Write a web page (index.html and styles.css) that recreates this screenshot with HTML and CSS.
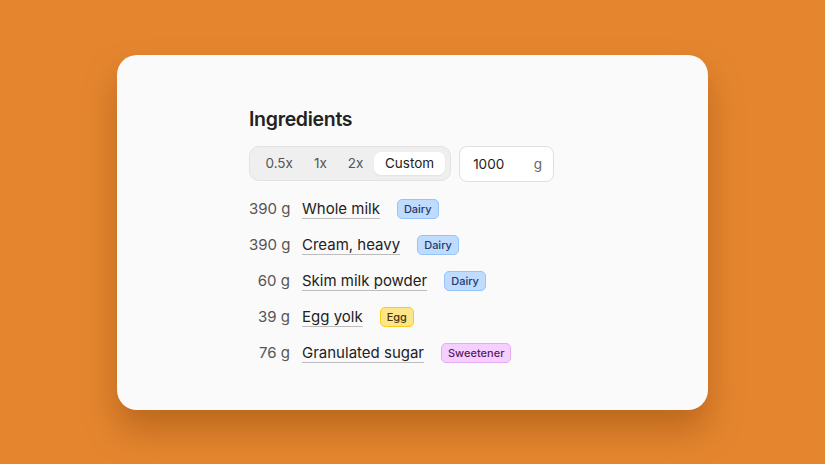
FILE: index.html
```html
<!doctype html>
<html lang="en">
<head>
    <meta charset="UTF-8">
    <title>Ingredients</title>
    <link rel="stylesheet" href="styles.css">
</head>
<body>
<div class="card">
    <h2 class="title">Ingredients</h2>
    <div class="controls">
        <div class="scale">
            <span class="opt">0.5x</span>
            <span class="opt">1x</span>
            <span class="opt">2x</span>
            <span class="opt active">Custom</span>
        </div>
        <div class="amount-box">
            <span class="val">1000</span>
            <span class="unit">g</span>
        </div>
    </div>
    <ul class="list">
        <li><span class="qty">390 g</span><span class="name">Whole milk</span><span class="tag dairy">Dairy</span></li>
        <li><span class="qty">390 g</span><span class="name">Cream, heavy</span><span class="tag dairy">Dairy</span></li>
        <li><span class="qty">60 g</span><span class="name">Skim milk powder</span><span class="tag dairy">Dairy</span></li>
        <li><span class="qty">39 g</span><span class="name">Egg yolk</span><span class="tag egg">Egg</span></li>
        <li><span class="qty">76 g</span><span class="name">Granulated sugar</span><span class="tag sweet">Sweetener</span></li>
    </ul>
</div>
</body>
</html>
```
FILE: styles.css
```css
* {
    margin: 0;
    padding: 0;
    box-sizing: border-box;
}

html, body {
    height: 100%;
}

body {
    background: #e5862f;
    font-family: Inter, "Noto Sans", sans-serif;
    display: flex;
    align-items: center;
    justify-content: center;
}

.card {
    width: 591px;
    height: 355px;
    background: #fafafa;
    border-radius: 20px;
    padding: 51px 132px 0;
    box-shadow: 0 20px 34px rgba(120, 55, 0, 0.38);
}

.title {
    font-size: 19.5px;
    line-height: 27px;
    font-weight: 600;
    color: #222;
    letter-spacing: -0.3px;
}

.controls {
    display: flex;
    gap: 8px;
    margin-top: 13px;
}

.scale {
    display: flex;
    align-items: center;
    height: 35px;
    padding: 0 5px 0 5px;
    background: #efefef;
    border: 1px solid #e2e2e2;
    border-radius: 10px;
}

.opt {
    font-size: 13.5px;
    color: #555;
    padding: 0 10.5px;
    line-height: 23px;
    white-space: nowrap;
}

.opt.active {
    background: #fff;
    color: #222;
    border-radius: 7px;
    padding: 0 11px;
    box-shadow: 0 1px 2px rgba(0, 0, 0, 0.06);
}

.amount-box {
    width: 95px;
    height: 36px;
    background: #fff;
    border: 1px solid #e0e0e0;
    border-radius: 8px;
    display: flex;
    align-items: center;
    justify-content: space-between;
    padding: 0 11px 0 13px;
    font-size: 13.5px;
}

.val {
    color: #222;
}

.unit {
    color: #666;
}

.list {
    list-style: none;
    margin-top: 9px;
}

.list li {
    display: flex;
    align-items: center;
    height: 36px;
    font-size: 15px;
    white-space: nowrap;
}

.qty {
    flex-shrink: 0;
    width: 41px;
    text-align: right;
    color: #555;
    margin-right: 12px;
}

.name {
    color: #222;
    text-decoration: underline;
    text-decoration-color: #bdbdbd;
    text-decoration-thickness: 1px;
    text-underline-offset: 4px;
    margin-right: 17px;
}

.tag {
    font-size: 11px;
    font-weight: 500;
    line-height: 18px;
    padding: 0 6px;
    border-radius: 5px;
    border: 1px solid;
}

.dairy {
    background: #bfdbfe;
    border-color: #93c5fd;
    color: #1e3a6e;
}

.egg {
    background: #fde68a;
    border-color: #facc15;
    color: #4a3408;
}

.sweet {
    background: #f5d0fe;
    border-color: #e9a8f5;
    color: #5b1a63;
}
```
